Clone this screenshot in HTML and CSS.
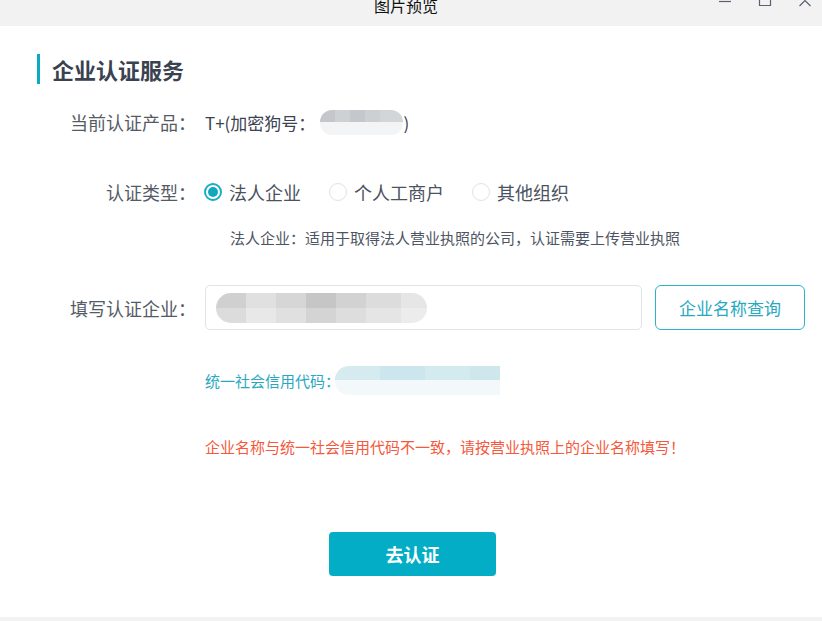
FILE: index.html
```html
<!DOCTYPE html>
<html lang="zh">
<head>
<meta charset="utf-8">
<link rel="stylesheet" href="styles.css">
</head>
<body>
<div class="window">
  <div class="titlebar">
    <div class="title">图片预览</div>
    <div class="controls">
      <svg class="ctl" width="14" height="8" viewBox="0 0 14 8"><path d="M1 1.5H13" stroke="#5a6270" stroke-width="1.2"/></svg>
      <svg class="ctl" width="14" height="8" viewBox="0 0 14 8"><path d="M1.5 -4V5.5H12.5V-4" stroke="#5a6270" stroke-width="1.2" fill="none"/></svg>
      <svg class="ctl" width="14" height="8" viewBox="0 0 14 8"><path d="M1.5 6L7 0.5L12.5 6" stroke="#5a6270" stroke-width="1.2" fill="none"/></svg>
    </div>
  </div>
  <div class="content">
    <h1 class="heading">企业认证服务</h1>

    <div class="row row-product">
      <div class="label">当前认证产品：</div>
      <div class="value">T+(加密狗号：<span class="blur blur-dog"></span>)</div>
    </div>

    <div class="row row-type">
      <div class="label">认证类型：</div>
      <div class="radios">
        <label class="radio checked"><span class="dot"></span>法人企业</label>
        <label class="radio"><span class="dot"></span>个人工商户</label>
        <label class="radio"><span class="dot"></span>其他组织</label>
      </div>
    </div>
    <div class="hint">法人企业：适用于取得法人营业执照的公司，认证需要上传营业执照</div>

    <div class="row row-company">
      <div class="label">填写认证企业：</div>
      <div class="input"><span class="blur blur-name"></span></div>
      <button class="query">企业名称查询</button>
    </div>

    <div class="code">统一社会信用代码：<span class="blur blur-code"></span></div>

    <div class="error">企业名称与统一社会信用代码不一致，请按营业执照上的企业名称填写！</div>

    <div class="actions"><button class="submit">去认证</button></div>
  </div>
  <div class="bottom"></div>
</div>
</body>
</html>
```
FILE: styles.css
```css
* { box-sizing: border-box; }
html, body { margin: 0; padding: 0; }
body {
  width: 822px;
  height: 621px;
  overflow: hidden;
  background: #fff;
  font-family: "Noto Sans CJK SC", "Noto Sans", sans-serif;
  color: #555b66;
}
.window { display: flex; flex-direction: column; height: 621px; }
.titlebar {
  height: 26px;
  background: #f2f2f2;
  display: flex;
  justify-content: center;
  position: relative;
  overflow: hidden;
}
.title {
  font-size: 16px;
  line-height: 20px;
  margin-top: -5px;
  margin-left: -10px;
  color: #111;
}
.controls {
  position: absolute;
  right: 10px;
  top: 0;
  display: flex;
  gap: 26px;
}
.ctl { display: block; }
.content { flex: 1; display: flex; flex-direction: column; }
.heading {
  margin: 28px 0 0 37px;
  padding-left: 12px;
  border-left: 3px solid #0aa9c4;
  height: 30px;
  line-height: 30px;
  font-size: 22px;
  font-weight: 700;
  color: #3a4250;
}
.row { display: flex; align-items: center; }
.label {
  width: 196px;
  text-align: right;
  font-size: 18px;
  color: #555b66;
  flex-shrink: 0;
  white-space: nowrap;
}
.row-product { margin-top: 24px; height: 28px; }
.value {
  margin-left: 9px;
  font-size: 17px;
  color: #3c4350;
  display: flex;
  align-items: center;
}
.blur { display: inline-block; }
.blur-dog {
  width: 83px;
  height: 25px;
  border-radius: 12px;
  margin-left: 5px;
  background:
    linear-gradient(to bottom, transparent 50%, #f3f4f6 50%),
    linear-gradient(to right, #c3c7cb 0 15px, #ced1d4 15px 30px, #c4c8cc 30px 45px, #cdd0d3 45px 60px, #d3d6d9 60px);
}
.row-type { margin-top: 42px; height: 28px; }
.radios { margin-left: 8px; display: flex; gap: 28px; }
.radio {
  display: flex;
  align-items: center;
  font-size: 18px;
  color: #4b5260;
}
.dot {
  width: 18px;
  height: 18px;
  border-radius: 50%;
  border: 1px solid #e2e2e2;
  margin-right: 7px;
  position: relative;
  background: #fff;
}
.radio.checked .dot { border: 2px solid #18aec6; }
.radio.checked .dot::after {
  content: "";
  position: absolute;
  left: 2px; top: 2px;
  width: 10px; height: 10px;
  border-radius: 50%;
  background: #12a7c0;
}
.hint {
  margin: 22px 0 0 230px;
  font-size: 15px;
  line-height: 20px;
  color: #4e5562;
}
.row-company { margin-top: 37px; }
.input {
  margin-left: 9px;
  width: 437px;
  height: 45px;
  border: 1px solid #e1e3e6;
  border-radius: 5px;
  display: flex;
  align-items: center;
  padding-left: 10px;
}
.blur-name {
  width: 211px;
  height: 30px;
  border-radius: 15px;
  background:
    linear-gradient(to bottom, transparent 50%, rgba(255,255,255,0.25) 50%),
    linear-gradient(to right, #d0d0d0 0 30px, #e0e0e0 30px 60px, #d6d6d6 60px 90px, #c6c6c6 90px 120px, #d2d2d2 120px 150px, #dcdcdc 150px 185px, #e6e6e6 185px);
}
.query {
  margin-left: 13px;
  width: 150px;
  height: 45px;
  border: 1.5px solid #2ab4cb;
  border-radius: 6px;
  background: #fff;
  color: #27a9c1;
  font-family: inherit;
  font-size: 17px;
  padding: 0;
}
.code {
  margin: 36px 0 0 205px;
  font-size: 15px;
  color: #2aa8bf;
  display: flex;
  align-items: center;
  height: 29px;
}
.blur-code {
  width: 165px;
  height: 29px;
  border-radius: 14px 0 0 14px;
  margin-left: -5px;
  background:
    linear-gradient(to bottom, transparent 50%, #f3f9fa 50%),
    linear-gradient(to right, #d5ebef 0 45px, #cbe6ec 45px 90px, #d3eaee 90px 135px, #cde7ec 135px);
}
.error {
  margin: 42px 0 0 205px;
  font-size: 15px;
  line-height: 20px;
  color: #f5583c;
}
.actions { margin: 75px 0 0 329px; }
.submit {
  width: 167px;
  height: 44px;
  border: none;
  border-radius: 4px;
  background: #03adc5;
  color: #fff;
  font-family: inherit;
  font-size: 18px;
  font-weight: 700;
  padding: 0;
}
.bottom { height: 4px; background: #f2f2f2; }
```
